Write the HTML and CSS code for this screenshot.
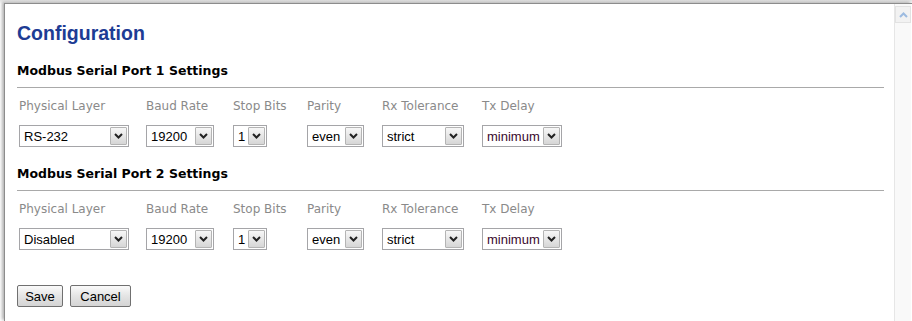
FILE: index.html
```html
<!DOCTYPE html>
<html lang="en">
<head>
    <meta charset="UTF-8">
    <title>Configuration</title>
    <link rel="stylesheet" href="styles.css">
</head>
<body>
    <div class="window">
        <main class="content">
            <h1 class="title">Configuration</h1>

            <form id="config-form">
                <section class="port">
                    <h2 class="port-head">Modbus Serial Port 1 Settings</h2>
                    <div class="port-grid">
                        <div class="field">
                            <label for="p1-phys">Physical Layer</label>
                            <span class="dd w-phys">
                                <select id="p1-phys"><option selected>RS-232</option><option>RS-485</option><option>Disabled</option></select>
                                <span class="dd-btn"><svg width="9" height="6" viewBox="0 0 9 6"><path d="M1 1 L4.5 4.5 L8 1" fill="none" stroke="#222" stroke-width="2"/></svg></span>
                            </span>
                        </div>
                        <div class="field">
                            <label for="p1-baud">Baud Rate</label>
                            <span class="dd w-baud">
                                <select id="p1-baud"><option>9600</option><option selected>19200</option><option>38400</option></select>
                                <span class="dd-btn"><svg width="9" height="6" viewBox="0 0 9 6"><path d="M1 1 L4.5 4.5 L8 1" fill="none" stroke="#222" stroke-width="2"/></svg></span>
                            </span>
                        </div>
                        <div class="field">
                            <label for="p1-stop">Stop Bits</label>
                            <span class="dd w-stop">
                                <select id="p1-stop"><option selected>1</option><option>2</option></select>
                                <span class="dd-btn"><svg width="9" height="6" viewBox="0 0 9 6"><path d="M1 1 L4.5 4.5 L8 1" fill="none" stroke="#222" stroke-width="2"/></svg></span>
                            </span>
                        </div>
                        <div class="field">
                            <label for="p1-parity">Parity</label>
                            <span class="dd w-parity">
                                <select id="p1-parity"><option>none</option><option selected>even</option><option>odd</option></select>
                                <span class="dd-btn"><svg width="9" height="6" viewBox="0 0 9 6"><path d="M1 1 L4.5 4.5 L8 1" fill="none" stroke="#222" stroke-width="2"/></svg></span>
                            </span>
                        </div>
                        <div class="field">
                            <label for="p1-rx">Rx Tolerance</label>
                            <span class="dd w-rx">
                                <select id="p1-rx"><option selected>strict</option><option>relaxed</option></select>
                                <span class="dd-btn"><svg width="9" height="6" viewBox="0 0 9 6"><path d="M1 1 L4.5 4.5 L8 1" fill="none" stroke="#222" stroke-width="2"/></svg></span>
                            </span>
                        </div>
                        <div class="field">
                            <label for="p1-tx">Tx Delay</label>
                            <span class="dd w-tx">
                                <select id="p1-tx" class="tx"><option selected>minimum</option><option>standard</option></select>
                                <span class="dd-btn"><svg width="9" height="6" viewBox="0 0 9 6"><path d="M1 1 L4.5 4.5 L8 1" fill="none" stroke="#222" stroke-width="2"/></svg></span>
                            </span>
                        </div>
                    </div>
                </section>

                <section class="port">
                    <h2 class="port-head">Modbus Serial Port 2 Settings</h2>
                    <div class="port-grid">
                        <div class="field">
                            <label for="p2-phys">Physical Layer</label>
                            <span class="dd w-phys">
                                <select id="p2-phys"><option>RS-232</option><option>RS-485</option><option selected>Disabled</option></select>
                                <span class="dd-btn"><svg width="9" height="6" viewBox="0 0 9 6"><path d="M1 1 L4.5 4.5 L8 1" fill="none" stroke="#222" stroke-width="2"/></svg></span>
                            </span>
                        </div>
                        <div class="field">
                            <label for="p2-baud">Baud Rate</label>
                            <span class="dd w-baud">
                                <select id="p2-baud"><option>9600</option><option selected>19200</option><option>38400</option></select>
                                <span class="dd-btn"><svg width="9" height="6" viewBox="0 0 9 6"><path d="M1 1 L4.5 4.5 L8 1" fill="none" stroke="#222" stroke-width="2"/></svg></span>
                            </span>
                        </div>
                        <div class="field">
                            <label for="p2-stop">Stop Bits</label>
                            <span class="dd w-stop">
                                <select id="p2-stop"><option selected>1</option><option>2</option></select>
                                <span class="dd-btn"><svg width="9" height="6" viewBox="0 0 9 6"><path d="M1 1 L4.5 4.5 L8 1" fill="none" stroke="#222" stroke-width="2"/></svg></span>
                            </span>
                        </div>
                        <div class="field">
                            <label for="p2-parity">Parity</label>
                            <span class="dd w-parity">
                                <select id="p2-parity"><option>none</option><option selected>even</option><option>odd</option></select>
                                <span class="dd-btn"><svg width="9" height="6" viewBox="0 0 9 6"><path d="M1 1 L4.5 4.5 L8 1" fill="none" stroke="#222" stroke-width="2"/></svg></span>
                            </span>
                        </div>
                        <div class="field">
                            <label for="p2-rx">Rx Tolerance</label>
                            <span class="dd w-rx">
                                <select id="p2-rx"><option selected>strict</option><option>relaxed</option></select>
                                <span class="dd-btn"><svg width="9" height="6" viewBox="0 0 9 6"><path d="M1 1 L4.5 4.5 L8 1" fill="none" stroke="#222" stroke-width="2"/></svg></span>
                            </span>
                        </div>
                        <div class="field">
                            <label for="p2-tx">Tx Delay</label>
                            <span class="dd w-tx">
                                <select id="p2-tx" class="tx"><option selected>minimum</option><option>standard</option></select>
                                <span class="dd-btn"><svg width="9" height="6" viewBox="0 0 9 6"><path d="M1 1 L4.5 4.5 L8 1" fill="none" stroke="#222" stroke-width="2"/></svg></span>
                            </span>
                        </div>
                    </div>
                </section>

                <div class="actions">
                    <button type="submit" class="btn btn-save">Save</button>
                    <button type="button" class="btn btn-cancel">Cancel</button>
                </div>
            </form>
        </main>

        <div class="scrollbar">
            <div class="sb-up">
                <svg width="9" height="6" viewBox="0 0 9 6"><path d="M1 5 L4.5 1.5 L8 5" fill="none" stroke="#9dbbe0" stroke-width="2"/></svg>
            </div>
        </div>
    </div>
</body>
</html>
```

FILE: styles.css
```css
html, body {
    margin: 0;
    padding: 0;
    height: 100%;
    overflow: hidden;
    background-color: #fff;
}

body {
    background: linear-gradient(#e2e2e2, #fff 4px);
}

.window {
    display: flex;
    height: calc(100% - 4px);
    margin: 3px 0 0 4px;
    border-top: 1px solid #8c8c8c;
    border-left: 1px solid #8c8c8c;
    background-color: #fff;
    box-shadow: -2px -1px 3px rgba(0, 0, 0, 0.3);
}

.content {
    flex: 1;
    padding: 17px 10px 0 12px;
}

.title {
    margin: 0;
    font-family: "Liberation Sans", Arial, sans-serif;
    font-size: 19.5px;
    line-height: 24px;
    font-weight: bold;
    color: #1d3c94;
}

.port {
    margin-bottom: 19px;
}

.port-head {
    margin: 18px 0 0 0;
    padding-bottom: 8px;
    border-bottom: 1px solid #a9a9a9;
    font-family: "DejaVu Sans", Verdana, sans-serif;
    font-size: 12.5px;
    line-height: 16px;
    font-weight: bold;
    color: #000;
}

.port + .port .port-head {
    margin-top: 0;
}

.port-grid {
    display: grid;
    grid-template-columns: 127px 87px 74px 75px 100px auto;
    margin: 11px 0 0 2px;
}

.field {
    display: flex;
    flex-direction: column;
    align-items: flex-start;
    gap: 11px;
}

label {
    font-family: "DejaVu Sans", Verdana, sans-serif;
    font-size: 12px;
    line-height: 15px;
    color: #8a8a8a;
}

.dd {
    display: inline-flex;
    box-sizing: border-box;
    height: 22px;
    border: 1px solid #a5a5a8;
    background-color: #fff;
}

.dd select {
    flex: 1;
    min-width: 0;
    height: 100%;
    margin: 0;
    padding: 0 0 0 4px;
    border: none;
    outline: none;
    background: transparent;
    -webkit-appearance: none;
    appearance: none;
    font-family: "Liberation Sans", Arial, sans-serif;
    font-size: 13px;
    color: #000;
}

.dd select.tx {
    color: #3a0a2c;
}

.dd-btn {
    display: flex;
    align-items: center;
    justify-content: center;
    box-sizing: border-box;
    width: 17px;
    margin: 1px;
    border: 1px solid #b4b4b4;
    border-radius: 1px;
    background: linear-gradient(#f7f7f7, #d6d6d6);
}

.w-phys { width: 110px; }
.w-baud { width: 68px; }
.w-stop { width: 34px; }
.w-parity { width: 57px; }
.w-rx { width: 82px; }
.w-tx { width: 80px; }

.actions {
    display: flex;
    gap: 7px;
    margin-top: 35px;
}

.btn {
    box-sizing: border-box;
    height: 22px;
    padding: 0;
    border: 1px solid #707070;
    border-radius: 2px;
    background: linear-gradient(#fafafa, #e4e4e4 50%, #d4d4d4);
    font-family: "Liberation Sans", Arial, sans-serif;
    font-size: 13px;
    color: #000;
    cursor: pointer;
}

.btn-save { width: 46px; }
.btn-cancel { width: 61px; }

.scrollbar {
    width: 16px;
    margin-right: 1px;
    border-left: 1px solid #e6e6e6;
    background-color: #f9f9f9;
}

.sb-up {
    display: flex;
    align-items: center;
    justify-content: center;
    height: 15px;
    margin-top: 2px;
    border: 1px solid #e2e2e2;
    background-color: #f2f2f2;
}
```
